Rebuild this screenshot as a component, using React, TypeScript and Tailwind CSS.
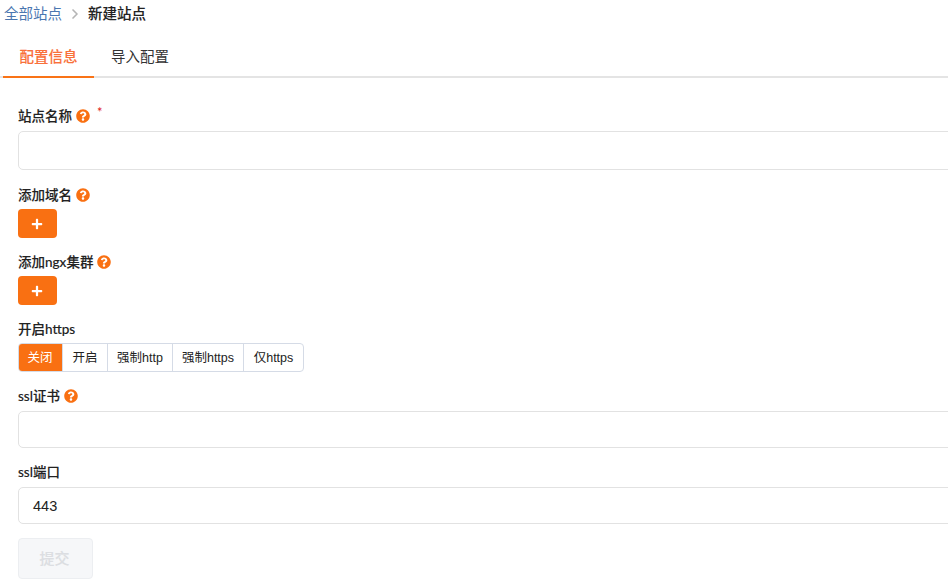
import { ChevronRight } from "lucide-react";
import type { ReactNode } from "react";
import { FaPlus, FaQuestionCircle } from "react-icons/fa";

const FONT = "font-['Lato','Liberation_Sans','Noto_Sans_CJK_SC',sans-serif]";
const ARIAL = "font-['Liberation_Sans','Noto_Sans_CJK_SC',sans-serif]";

function Label({ children, help }: { children: ReactNode; help?: boolean }) {
  return (
    <div className="flex h-5 items-center text-[13.5px] leading-5 font-medium text-[#222] [-webkit-text-stroke:0.12px_#222]">
      <span>{children}</span>
      {help && <FaQuestionCircle className="ml-[4px] h-[14px] w-[14px] shrink-0 text-[#f97012]" />}
    </div>
  );
}

function AddButton() {
  return (
    <button
      type="button"
      className="flex h-[29px] w-[39px] items-center justify-center rounded-[4px] bg-[#f97012] pr-[2px] text-white"
    >
      <FaPlus className="h-[12px] w-[12px]" />
    </button>
  );
}

const HTTPS_OPTIONS = [
  { label: "关闭", width: "w-[44px]" },
  { label: "开启", width: "w-[45px]" },
  { label: "强制http", width: "w-[65px]" },
  { label: "强制https", width: "w-[71px]" },
  { label: "仅https", width: "w-[60px]" },
];

export default function App() {
  return (
    <div className={`h-[583px] w-[948px] overflow-hidden bg-white ${FONT}`}>
      <div className="flex h-[28px] items-center pl-1 text-[14.5px]">
        <span className="text-[#4a76b0]">全部站点</span>
        <ChevronRight className="mx-[5px] h-[16px] w-[16px] text-[#b5b5b5]" strokeWidth={2.5} />
        <span className="font-medium text-[#222] [-webkit-text-stroke:0.12px_#222]">新建站点</span>
      </div>

      <div className="mt-[10px] flex h-[40px] border-b-2 border-[#e4e4e4] text-[14.5px]">
        <div className="-mb-[2px] ml-[3px] flex h-[40px] w-[91px] items-center justify-center border-b-2 border-[#f97316] font-medium text-[#f9703a] [-webkit-text-stroke:0.12px_#f9703a]">
          配置信息
        </div>
        <div className="ml-[17px] flex items-center text-[#333]">导入配置</div>
      </div>

      <div className="w-[1000px] pl-[18px]">
        <div className="mt-[28px] flex h-5 items-center">
          <Label help>站点名称</Label>
          <span className="mb-2 ml-[7px] text-[13px] leading-none text-[#e02020]">*</span>
        </div>
        <div className="mt-[5px] h-[39px] rounded-[5px] border border-[#e2e2e2] bg-white" />

        <div className="mt-[15px]">
          <Label help>添加域名</Label>
        </div>
        <div className="mt-[4px]">
          <AddButton />
        </div>

        <div className="mt-[14px]">
          <Label help>添加ngx集群</Label>
        </div>
        <div className="mt-[4px]">
          <AddButton />
        </div>

        <div className="mt-[14px]">
          <Label>开启https</Label>
        </div>
        <div className={`mt-[4px] flex h-[29px] w-fit overflow-hidden rounded-[4px] border border-[#d5dbe6] text-[12.5px] text-[#222] ${ARIAL}`}>
          {HTTPS_OPTIONS.map((opt, i) => (
            <div
              key={opt.label}
              className={
                i === 0
                  ? `-my-px -ml-px flex items-center justify-center bg-[#f97012] pt-px text-white ${opt.width}`
                  : `flex items-center justify-center border-l border-[#d5dbe6] pt-px ${opt.width}`
              }
            >
              {opt.label}
            </div>
          ))}
        </div>

        <div className="mt-[14px]">
          <Label help>ssl证书</Label>
        </div>
        <div className="mt-[5px] h-[37px] rounded-[5px] border border-[#e2e2e2] bg-white" />

        <div className="mt-[14px]">
          <Label>ssl端口</Label>
        </div>
        <div className={`mt-[5px] flex h-[37px] items-center rounded-[5px] border border-[#e2e2e2] bg-white pt-[2px] pl-[14px] text-[14.5px] text-[#222] ${ARIAL}`}>
          443
        </div>

        <button
          type="button"
          className="mt-[14px] h-[41px] w-[75px] rounded-[4px] border border-[#eceef1] bg-[#f6f7f9] pr-[2px] text-[15px] font-medium text-[#dcdee2] [-webkit-text-stroke:0.12px_#dcdee2]"
        >
          提交
        </button>
      </div>
    </div>
  );
}
